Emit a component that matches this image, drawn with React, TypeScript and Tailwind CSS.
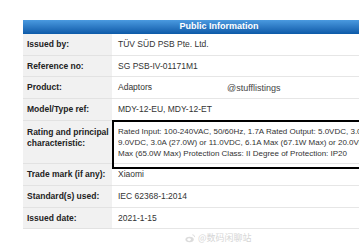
import React from 'react';

const rows = [
  { label: 'Issued by:', value: 'TÜV SÜD PSB Pte. Ltd.', h: 'h-[22px]' },
  { label: 'Reference no:', value: 'SG PSB-IV-01171M1', h: 'h-[21px]' },
  { label: 'Product:', value: 'Adaptors', h: 'h-[22px]' },
  { label: 'Model/Type ref:', value: 'MDY-12-EU, MDY-12-ET', h: 'h-[22px]' },
];

const rowsAfter = [
  { label: 'Trade mark (if any):', value: 'Xiaomi', h: 'h-[22px]' },
  { label: 'Standard(s) used:', value: 'IEC 62368-1:2014', h: 'h-[22px]' },
  { label: 'Issued date:', value: '2021-1-15', h: 'h-[21px]' },
];

const Row = ({ label, value, h }: { label: string; value: string; h: string }) => (
  <div className={`grid grid-cols-[89px_1fr] ${h}`}>
    <div className="bg-[#f1f1f1] border-b border-[#e2e2e2] pl-[4px] flex items-center font-bold text-[8.5px] text-[#222] whitespace-nowrap">
      {label}
    </div>
    <div className="border-b border-[#e6e6e6] pl-[6px] flex items-center text-[8.5px] text-[#333]">
      {value}
    </div>
  </div>
);

export default function App() {
  return (
    <div className="relative w-[359px] h-[250px] overflow-hidden bg-white font-['Liberation_Sans',Arial,sans-serif]">
      <div className="ml-[23px] mt-[20px] w-[392px]">
        {/* header */}
        <div className="h-[14px] bg-gradient-to-b from-[#4a9ae0] to-[#0b5aa8] flex items-center justify-center text-white font-bold text-[9px]">
          Public Information
        </div>

        {rows.map((r) => (
          <Row key={r.label} {...r} />
        ))}

        {/* rating row */}
        <div className="grid grid-cols-[89px_1fr] h-[43px]">
          <div className="bg-[#f1f1f1] border-b border-[#e2e2e2] pl-[4px] pt-[6px] font-bold text-[8.5px] leading-[11px] text-[#222] whitespace-nowrap">
            Rating and principal
            <br />
            characteristic:
          </div>
          <div className="border-b border-[#e6e6e6] pl-[6px] pt-[5px] text-[8px] leading-[11px] text-[#333] whitespace-nowrap">
            Rated Input: 100-240VAC, 50/60Hz, 1.7A Rated Output: 5.0VDC, 3.0A or
            <br />
            9.0VDC, 3.0A (27.0W) or 11.0VDC, 6.1A Max (67.1W Max) or 20.0VDC, 3.25A
            <br />
            Max (65.0W Max) Protection Class: II Degree of Protection: IP20
          </div>
        </div>

        {rowsAfter.map((r) => (
          <Row key={r.label} {...r} />
        ))}
      </div>

      {/* annotation box */}
      <div className="absolute left-[112px] top-[120px] w-[260px] h-[49px] border-2 border-black" />

      {/* handle */}
      <div className="absolute left-[227px] top-[82px] text-[9px] text-[#444]">@stufflistings</div>

      {/* weibo watermark */}
      <div className="absolute left-[185px] top-[231px] flex items-center gap-[2px] text-[9px] text-[#d6d6d6]">
        <svg width="11" height="10" viewBox="0 0 24 20" fill="none">
          <ellipse cx="10" cy="13" rx="9" ry="6" fill="#dcdcdc" />
          <ellipse cx="9" cy="13.5" rx="4" ry="3" fill="#fff" />
          <path d="M16 3a5 5 0 0 1 5 5" stroke="#dcdcdc" strokeWidth="2" />
        </svg>
        <span className="font-['Noto_Sans_CJK_SC',sans-serif]">@数码闲聊站</span>
      </div>
    </div>
  );
}
